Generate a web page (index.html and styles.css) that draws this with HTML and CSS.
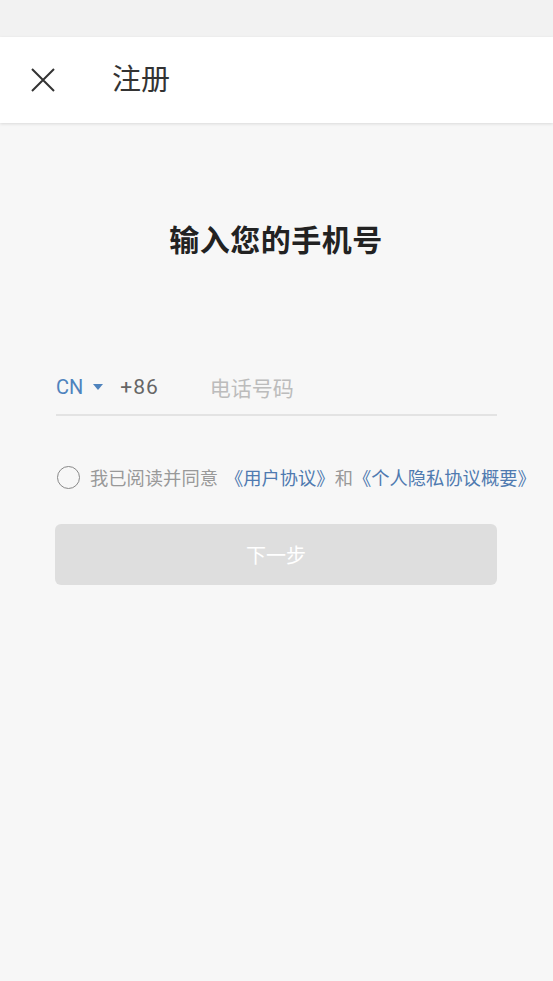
FILE: index.html
```html
<!DOCTYPE html>
<html lang="zh-CN">
<head>
    <meta charset="UTF-8">
    <meta name="viewport" content="width=device-width, initial-scale=1.0">
    <title>注册</title>
    <link rel="stylesheet" href="styles.css">
</head>
<body>
    <div class="status-bar"></div>
    <div class="header">
        <span class="close-btn">
            <svg width="24" height="24" viewBox="0 0 24 24">
                <path d="M1 1 L23 23 M23 1 L1 23" stroke="#333" stroke-width="2" fill="none"/>
            </svg>
        </span>
        <h1 class="header-title">注册</h1>
    </div>

    <div class="main">
        <h2 class="page-title">输入您的手机号</h2>

        <div class="phone-row">
            <span class="country">CN</span>
            <span class="arrow"></span>
            <span class="code">+86</span>
            <span class="placeholder">电话号码</span>
        </div>

        <div class="agree-row">
            <span class="check"></span>
            <span class="agree-text">我已阅读并同意</span>
            <a class="link first">《用户协议》</a><span class="agree-text">和</span><a class="link">《个人隐私协议概要》</a>
        </div>

        <div class="next-btn">下一步</div>
    </div>
</body>
</html>
```

FILE: styles.css
```css
*{
    margin: 0;
    padding: 0;
    box-sizing: border-box;
}
body{
    width: 553px;
    height: 981px;
    background: #f7f7f7;
    font-family: Roboto, "Noto Sans CJK SC", sans-serif;
    overflow: hidden;
}
.status-bar{
    height: 37px;
    background: #f2f2f2;
}
.header{
    height: 86px;
    background: #fff;
    display: flex;
    align-items: center;
    padding-left: 31px;
    box-shadow: 0 1px 3px rgba(0, 0, 0, 0.12);
    position: relative;
}
.close-btn{
    width: 24px;
    height: 24px;
    display: block;
}
.close-btn svg{
    display: block;
}
.header-title{
    margin-left: 57px;
    font-size: 29px;
    font-weight: normal;
    color: #333;
    line-height: 1;
}
.main{
    padding: 0 56px 0 55px;
}
.page-title{
    margin-top: 98px;
    text-align: center;
    font-size: 30px;
    font-weight: bold;
    color: #222;
    line-height: 40px;
    letter-spacing: 0.5px;
}
.phone-row{
    margin-top: 100px;
    margin-left: 1px;
    height: 55px;
    border-bottom: 2px solid #e3e3e3;
    display: flex;
    align-items: center;
    padding-bottom: 2px;
}
.country{
    font-size: 20px;
    color: #4f83bd;
}
.arrow{
    width: 0;
    height: 0;
    margin-left: 10px;
    border-left: 5.5px solid transparent;
    border-right: 5.5px solid transparent;
    border-top: 6px solid #4f83bd;
}
.code{
    margin-left: 17px;
    font-size: 21px;
    color: #666;
    letter-spacing: 1px;
}
.placeholder{
    margin-left: 51px;
    font-size: 21px;
    color: #bcbcbc;
}
.agree-row{
    margin-top: 48px;
    display: flex;
    align-items: center;
    white-space: nowrap;
    font-size: 18.3px;
}
.check{
    flex-shrink: 0;
    width: 23px;
    height: 23px;
    margin-left: 2px;
    border: 1.5px solid #888;
    border-radius: 50%;
    margin-right: 10px;
}
.agree-text{
    color: #999;
}
.link{
    color: #4f7ab0;
}
.link.first{
    margin-left: 7px;
}
.next-btn{
    margin-top: 34px;
    height: 61px;
    background: #dedede;
    border-radius: 6px;
    color: #fff;
    font-size: 20px;
    display: flex;
    align-items: center;
    justify-content: center;
}
```
